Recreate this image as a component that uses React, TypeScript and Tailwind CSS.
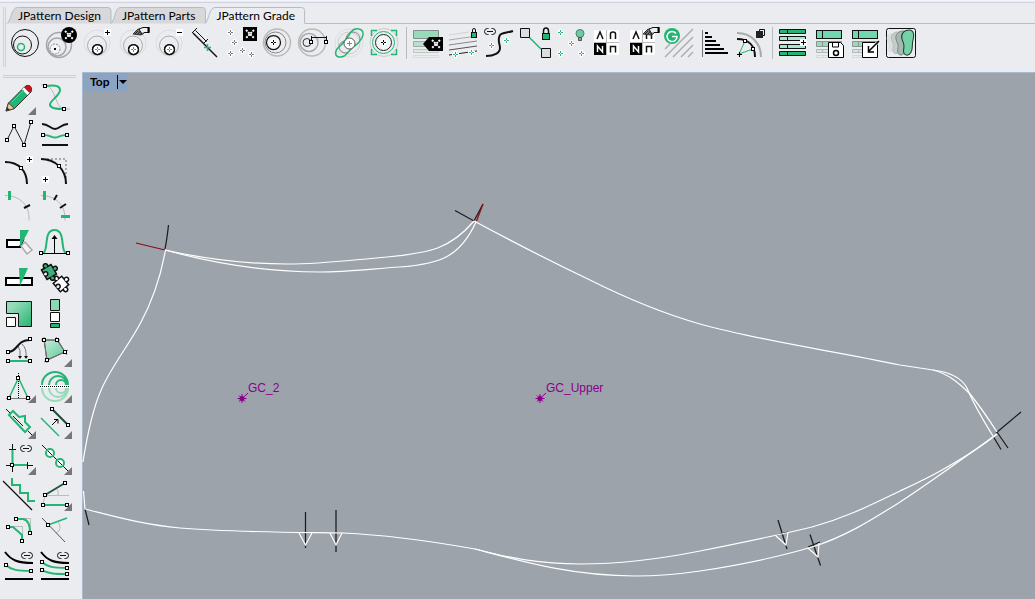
import type { ReactNode } from "react";

const GREEN = "#22b573";
const LIGHT = "#98dbbb";

interface Tool {
  name: string;
  art: ReactNode;
  flyout?: boolean;
}

/* Shared glyph parts, all drawn on a 36 x 36 grid */

function Node({ x, y }: { x: number; y: number }) {
  return <rect x={x - 1.5} y={y - 1.5} width="3" height="3" fill="#fff" stroke="#000" />;
}

function Cross({ x, y, color = GREEN }: { x: number; y: number; color?: string }) {
  return (
    <g>
      <path d={`M${x - 3} ${y}h7M${x + 0.5} ${y - 3.5}v7`} stroke="#fff" strokeWidth="3" />
      <path
        d={`M${x - 2} ${y}h2M${x + 1} ${y}h2M${x + 0.5} ${y - 2.5}v2M${x + 0.5} ${y + 0.5}v2`}
        stroke={color}
      />
    </g>
  );
}

function Badge({ x, y, minus = false }: { x: number; y: number; minus?: boolean }) {
  return (
    <g>
      <rect x={x - 3} y={y - 3} width="7" height="7" fill="#fff" />
      <path d={minus ? `M${x - 2} ${y + 0.5}h5` : `M${x - 2} ${y + 0.5}h5M${x + 0.5} ${y - 2}v5`} stroke="#000" />
    </g>
  );
}

function XMark({ x, y }: { x: number; y: number }) {
  return (
    <path
      d={`M${x - 4} ${y - 4}l8 8M${x + 4} ${y - 4}l-8 8`}
      stroke="#fff"
      strokeWidth="2"
      strokeDasharray="2 1"
    />
  );
}

function Brush() {
  return (
    <g>
      <path d="M18 9l5-5 4 1 2 3-3 2z" fill="#777" stroke="#333" />
      <path d="M24 4l4-1.500h6v5h-5l-2 2z" fill="#eee" stroke="#111" />
      <path d="M33.500 2v6" stroke="#000" strokeWidth="2" />
      <path d="M20 9l3-3M22.500 9.500l3-3.500M25 9.500l2-2" stroke="#222" />
    </g>
  );
}

function Lock({ x, y, big = false }: { x: number; y: number; big?: boolean }) {
  return big ? (
    <g>
      <path d={`M${x - 2.5} ${y}v-3q0-3 2.500-3t2.500 3v3`} stroke="#111" strokeWidth="1.5" />
      <rect x={x - 3.5} y={y - 0.5} width="7" height="6" fill={GREEN} stroke="#111" />
    </g>
  ) : (
    <g>
      <path d={`M${x - 1.5} ${y}v-3q0-1.500 1.500-1.500t1.500 1.500v3`} stroke="#111" />
      <rect x={x - 2.5} y={y - 0.5} width="5" height="5" fill={GREEN} stroke="#111" />
    </g>
  );
}

function Link({ x, y }: { x: number; y: number }) {
  return (
    <g>
      <rect x={x - 5.5} y={y - 3} width="11" height="6" rx="3" stroke="#111" />
      <path d={`M${x} ${y - 4}v2M${x} ${y + 2}v2`} stroke="#ebecf0" strokeWidth="3" />
      <path d={`M${x - 3} ${y}h6`} stroke="#111" />
    </g>
  );
}

function Rings() {
  return (
    <g>
      <circle cx="18" cy="18" r="13" stroke="#dcdcde" />
      <circle cx="18" cy="20.500" r="9.500" stroke="#aaabad" />
      <circle cx="18.500" cy="24.500" r="5" fill="#fff" stroke="#111" strokeWidth="1.25" />
      <Cross x={18} y={24.5} />
      <circle cx="18.500" cy="24.500" r="5" stroke="#111" strokeWidth="1.25" />
    </g>
  );
}

function NestTable({ left, width = 26 }: { left: number; width?: number }) {
  return (
    <g>
      <rect x={left + 0.5} y="5.500" width={width - 1} height="8" fill="#72d6af" stroke="#111" />
      <path d={`M${left + 6.5} 5v9`} stroke="#111" />
      <path d={`M${left + 0.5} 16.500h${width - 1}v5h-${width - 1}zM${left + 6.5} 16v6`} fill="#98dbbb" stroke="#8b9490" />
      <path d={`M${left + 0.5} 24.500h${width - 1}v3h-${width - 1}zM${left + 6.5} 24v4`} fill="#d3e9df" stroke="#b3b9b8" />
      <path d={`M${left + 0.5} 30.500h${width - 1}v2h-${width - 1}zM${left + 6.5} 30v3`} stroke="#d6d9db" />
    </g>
  );
}

function Letters() {
  return (
    <g>
      <path d="M5 5h12v12H5zM18 5h12v12H18zM18 18h12v12H18z" fill="#fff" />
      <path d="M5 18h12v12H5z" fill="#000" />
      <path d="M17.500 5v25M5 17.500h25" stroke="#bbb" />
      <path d="M8 14l3-7 3 7M21.500 14V9q0-2 2.500-2t2.500 2v5M21.500 27.500v-6h5v6" stroke="#111" strokeWidth="1.5" />
      <path d="M8.500 27v-6l5 6v-6" stroke="#fff" strokeWidth="1.5" />
    </g>
  );
}

const PUZZLE =
  "M-5.500-5.500h4a2.200 2.200 0 1 1 3 0h4v4a2.200 2.200 0 1 1 0 3v4h-4a2.200 2.200 0 1 1-3 0h-4v-4a2.200 2.200 0 1 0 0-3z";
const FOOT =
  "M3 0c4 0 5 4 4 8-1 3-1 5-1 8 0 4-2 8-5 8s-4-3-3-7c1-3-1-5-2-9-1-5 3-8 7-8z";

const gradeTools: Tool[] = [
  {
    name: "Grade circles",
    art: (
      <>
        <circle cx="18" cy="18" r="13.500" stroke="#111" />
        <circle cx="15.500" cy="20" r="9" stroke="#111" />
        <circle cx="14" cy="22" r="3.500" stroke={GREEN} strokeWidth="1.5" />
      </>
    ),
  },
  {
    name: "Remove grade",
    art: (
      <>
        <circle cx="16" cy="20" r="12.500" stroke="#a5a5a8" strokeWidth="1.5" />
        <circle cx="14" cy="22" r="9" stroke="#a5a5a8" strokeWidth="1.500" />
        <circle cx="12" cy="24" r="5" fill="#f4f4f6" stroke="#888" strokeDasharray="2 1" />
        <rect x="11" y="23" width="2" height="2" fill="#000" />
        <circle cx="26" cy="10" r="8" fill="#000" />
        <XMark x={26} y={10} />
      </>
    ),
  },
  { name: "Add grade point", art: <><Rings /><Badge x={28} y={7} /></> },
  { name: "Edit grade point", art: <><Rings /><Brush /></> },
  { name: "Subtract grade point", art: <><Rings /><Badge x={28} y={7} minus /></> },
  {
    name: "Measure",
    art: (
      <>
        <path d="M6 8l24 24" stroke="#111" strokeWidth="1.5" />
        <path d="M8.500 5.500l11 11M5 8l5-5M16 19l5-5" stroke="#111" />
        <path d="M17 22.500h7M20.500 19v7" stroke={GREEN} strokeWidth="1.500" />
      </>
    ),
  },
  {
    name: "Delete points",
    art: (
      <>
        <Cross x={7} y={7.5} color="#777" />
        <Cross x={11} y={17.5} color="#777" />
        <Cross x={7} y={28.5} color="#777" />
        <Cross x={19} y={25.5} color="#777" />
        <Cross x={28} y={29.5} color="#777" />
        <path d="M20 2h14v14H20z" fill="#000" />
        <XMark x={27} y={9} />
      </>
    ),
  },
  {
    name: "Offset rings",
    art: (
      <>
        <circle cx="18" cy="17.500" r="13.500" stroke="#bbb" strokeWidth="1.5" />
        <circle cx="16.500" cy="17.500" r="10.500" stroke="#888" />
        <circle cx="14.500" cy="17.500" r="7" fill="#f4f4f6" stroke="#111" strokeWidth="1.25" />
        <Cross x={14} y={17.5} color="#000" />
      </>
    ),
  },
  {
    name: "Ring distance",
    art: (
      <>
        <circle cx="17" cy="17.500" r="13.500" stroke="#bbb" strokeWidth="1.500" />
        <circle cx="14" cy="17.500" r="9" stroke="#aaa" strokeWidth="1.500" />
        <circle cx="12" cy="17.500" r="4" stroke="#333" />
        <path d="M16.500 11v6M31.500 11v6M16 12.500h15" stroke="#111" />
        <Node x={16} y={17} />
        <Node x={31} y={17} />
      </>
    ),
  },
  {
    name: "Grade path",
    art: (
      <>
        <circle cx="18" cy="18" r="14" stroke="#dedee0" />
        <circle cx="18" cy="18" r="11" stroke="#ccc" />
        <circle cx="22" cy="14" r="7" stroke="#888" />
        <circle cx="14" cy="22" r="6" stroke="#888" />
        <path d="M20 7c4-5 13-4 12 3-1 6-7 10-11 13-5 5-7 10-13 9-5-1-4-7 0-10 5-4 8-9 12-15z" stroke={GREEN} strokeWidth="1.5" />
        <circle cx="18.500" cy="18.500" r="5.500" fill="#fff" stroke="#555" />
        <path d="M16 18.500h5M18.500 16v5" stroke={GREEN} />
      </>
    ),
  },
  {
    name: "Select ring",
    art: (
      <>
        <circle cx="17" cy="17.500" r="14" stroke="#ccc" />
        <circle cx="16.500" cy="17.500" r="11" stroke={GREEN} />
        <circle cx="16.500" cy="17.500" r="8" fill="#f4f4f6" stroke="#222" />
        <Cross x={16} y={17.5} color="#000" />
        <path d="M10 5.500H4.500V11M24 5.500h5.500V11M4.500 24v5.500H10M24 29.500h5.500V24" stroke={GREEN} strokeWidth="1.5" />
      </>
    ),
  },
];

const nestTools: Tool[] = [
  {
    name: "Delete row",
    art: (
      <>
        <path d="M4.500 5.500h25v8h-25z" fill={LIGHT} stroke="#7f9188" />
        <path d="M4.500 16.500h25v5h-25z" fill="#b5e0cc" stroke="#a3aaa8" />
        <path d="M4.500 24.500h25v3h-25z" fill="#d9ebe3" stroke="#c0c5c5" />
        <path d="M4.500 30.500h25v2h-25z" stroke="#d9dcdd" />
        <path d="M14 19l6-7h14v14H20z" fill="#000" />
        <XMark x={27} y={19} />
      </>
    ),
  },
  {
    name: "Lock lines",
    art: (
      <>
        <path d="M4 10l20-3" stroke="#d3d3d6" />
        <path d="M4 15l28-4" stroke="#aaa" />
        <path d="M4 20l28-4" stroke="#888" />
        <path d="M4 25l28-4" stroke="#555" />
        <path d="M4 30l28-4" stroke="#222" />
        <Cross x={10} y={29.5} />
        <Cross x={26} y={27.5} />
        <Lock x={29} y={8} />
      </>
    ),
  },
  {
    name: "Link curve",
    art: (
      <>
        <path d="M5 31c8 0 14-3 14-8 0-4-3-8 0-13 2-3 7-2 13-4" stroke="#111" strokeWidth="2" />
        <Link x={9} y={6.5} />
        <Cross x={10} y={20.5} />
        <Cross x={25} y={15.5} />
      </>
    ),
  },
  {
    name: "Lock link",
    art: (
      <>
        <path d="M12 12l12 12" stroke={GREEN} strokeWidth="1.500" />
        <path d="M3.500 3.500h9v9h-9zM24.500 23.500h9v9h-9z" fill="#ddd" stroke="#111" />
        <Lock x={29} y={9} big />
      </>
    ),
  },
  {
    name: "Show points",
    art: (
      <>
        <Cross x={7} y={7.5} />
        <Cross x={18} y={18.5} />
        <Cross x={7} y={28.5} />
        <Cross x={28} y={28.5} />
        <circle cx="27" cy="8.500" r="4" fill="#6fcaa0" stroke="#3b8766" />
        <path d="M25.500 12.500h3v3h-3z" fill="#999" stroke="#555" />
      </>
    ),
  },
  { name: "Notch types", art: <Letters /> },
  { name: "Edit notch types", art: <><Letters /><Brush /></> },
  {
    name: "Grade hatch",
    art: (
      <>
        <path d="M4 32L32 4M12 32l20-20M20 32l12-12M27 32l5-5M4 24l5-5" stroke="#aeaeb1" strokeWidth="1.5" />
        <circle cx="11" cy="11" r="8" fill={GREEN} />
        <path d="M15 8.500a5 5 0 1 0 1 3h-5" stroke="#fff" strokeWidth="1.5" />
      </>
    ),
  },
  {
    name: "Size steps",
    art: (
      <>
        <path d="M5.500 5v27" stroke="#777" />
        <path d="M8 8h3M8 12h7M8 16h11M8 20h15M8 24h19M8 28h23" stroke="#000" strokeWidth="2" />
      </>
    ),
  },
  {
    name: "Radial grade",
    art: (
      <>
        <path d="M4 8c14 0 24 10 24 24" stroke="#aaa" strokeWidth="2" />
        <path d="M4 14c12 0 18 7 18 18" stroke="#111" strokeWidth="2" />
        <path d="M12 16L6 29l14-5" stroke={GREEN} />
        <path d="M4 29.500h5M6.500 27v5" stroke="#000" />
        <Node x={12} y={16} />
        <Node x={20} y={24} />
        <path d="M26.500 4.500h5v6h-5z" stroke="#111" />
        <path d="M23 6h7v7h-7z" fill="#222" />
      </>
    ),
  },
];

const tableTools: Tool[] = [
  {
    name: "Add row",
    art: (
      <>
        <path d="M4.500 4.500h26v4h-26zM4.500 26.500h26v4h-26z" fill={GREEN} stroke="#111" />
        <path d="M4.500 11.500h26v4h-26zM4.500 19.500h26v4h-26z" fill="#aee3cb" stroke="#111" />
        <path d="M12.500 4v5M12.500 11v5M12.500 19v5M12.500 26v5" stroke="#111" />
        <Badge x={28} y={17} />
      </>
    ),
  },
  {
    name: "Save table",
    art: (
      <>
        <NestTable left={5} />
        <path d="M17.500 17.500h12l3 3v12h-15z" fill="#fff" stroke="#000" />
        <path d="M21.500 18v4h6v-4" stroke="#000" />
        <circle cx="25" cy="28" r="2.500" stroke="#000" strokeWidth="1.5" />
      </>
    ),
  },
  {
    name: "Import table",
    art: (
      <>
        <NestTable left={5} />
        <path d="M28 17.500H15.500v15h15V20" fill="#fff" stroke="#000" />
        <path d="M32 16L21 27M21.500 21v6H27" stroke="#000" strokeWidth="1.500" />
      </>
    ),
  },
  {
    name: "Show nested sizes",
    art: (
      <>
        <rect x="3.500" y="3.500" width="29" height="29" rx="2" stroke="#111" fill="#ebecf0" />
        <g transform="translate(7 8) scale(.8)"><path d={FOOT} fill="#dcdfe0" /></g>
        <g transform="translate(12 7) scale(.9)"><path d={FOOT} fill="#c4cdca" stroke="#b1b8b7" /></g>
        <g transform="translate(17 6)"><path d={FOOT} fill="#a5b9b0" stroke="#7b8682" /></g>
        <g transform="translate(23 5) scale(1.05)"><path d={FOOT} fill="#75d1a8" stroke="#24392f" /></g>
      </>
    ),
  },
];

const drawTools: Tool[] = [
  {
    name: "Pencil",
    flyout: true,
    art: (
      <>
        <path d="M5 31l2.500-8L24 6.500q2-2 5-.500 3 3 1 6L13.500 28.500z" fill={GREEN} stroke="#333" />
        <path d="M5 31l2.500-8 6 5.500z" fill="#f1c896" stroke="#444" />
        <path d="M5 31l1-4 3 3z" fill="#333" />
        <path d="M25 6q2-2 4.500 0 2.500 2.500.500 5l-2 2-5.500-5z" fill="#c1121f" />
        <path d="M21 9.500l5.500 5.500 2-2L23 7.500z" fill="#fff" />
        <path d="M11 22L23 10" stroke="#5ccb98" />
      </>
    ),
  },
  {
    name: "Free curve",
    art: (
      <>
        <path d="M4 5h4c12 3 9 22 19 24h6" stroke="#b9b9bc" />
        <path d="M8 6c8-1 15-1 15 4 0 6-11 11-10 15s8 4 14 4" stroke={GREEN} strokeWidth="2" />
        <Node x={8} y={6} />
        <Node x={27} y={29} />
      </>
    ),
  },
  {
    name: "Polyline",
    art: (
      <>
        <path d="M6 24l7-14 10 19 7-23" stroke="#222" />
        <Node x={6} y={24} /><Node x={13} y={10} /><Node x={23} y={29} /><Node x={30} y={6} />
      </>
    ),
  },
  {
    name: "Middle curve",
    art: (
      <>
        <path d="M5 8c7 0 8 5 13 5s6-5 13-5M5 29h26" stroke="#111" strokeWidth="2" />
        <path d="M6 19c8 0 8 2.500 12 2.500s4-2.500 12-2.500" stroke={GREEN} strokeWidth="2" />
        <Node x={6} y={19} /><Node x={30} y={19} />
      </>
    ),
  },
  {
    name: "Add point on curve",
    art: (
      <>
        <path d="M4 10c14 0 22 9 22 22" stroke="#111" strokeWidth="2" />
        <Node x={20} y={16} />
        <Badge x={28} y={7} />
      </>
    ),
  },
  {
    name: "Add corner point",
    art: (
      <>
        <path d="M10 7h19v21" stroke="#aaa" strokeWidth="2" strokeDasharray="2 2" />
        <path d="M4 7c14 0 25 10 25 25" stroke="#111" strokeWidth="2" />
        <Node x={22} y={14} />
        <Badge x={8} y={27} />
      </>
    ),
  },
  {
    name: "Point at distance",
    art: (
      <>
        <path d="M4 7.500c14 0 25 9 24 25" stroke="#b9b9bc" />
        <path d="M8.500 3v9" stroke={GREEN} strokeWidth="3" />
        <path d="M23 20l6-3" stroke="#111" strokeWidth="2" />
      </>
    ),
  },
  {
    name: "Divide curve",
    art: (
      <>
        <path d="M4 7.500c14 0 25 9 24 25" stroke="#b9b9bc" />
        <path d="M7.500 3v9M24 28.500h9" stroke={GREEN} strokeWidth="3" />
        <path d="M23 20l6-4M17 12l3-5" stroke="#111" strokeWidth="2" />
      </>
    ),
  },
  {
    name: "Cut piece",
    art: (
      <>
        <path d="M6 16h16l-3 7H6z" fill="#fff" stroke="#000" strokeWidth="2" />
        <path d="M20 22l4-4 7 8-5 4z" fill="#f4f4f6" stroke="#aaa" strokeWidth="1.500" />
        <path d="M19 6h9l-8 15-1 2z" fill={GREEN} />
      </>
    ),
  },
  {
    name: "Bell curve",
    art: (
      <>
        <path d="M6 29c6-2 0-23 11.500-23S23 27 29 29" stroke={GREEN} strokeWidth="2" />
        <path d="M4 29.500h27M17.500 29V12" stroke="#000" />
        <path d="M14.500 15l3-4 3 4z" fill="#000" />
        <Node x={4} y={29} /><Node x={31} y={29} />
      </>
    ),
  },
  {
    name: "Split piece",
    art: (
      <>
        <path d="M5 18h26v7H5z" fill="#fff" stroke="#000" strokeWidth="2" />
        <path d="M18 8h9l-8 18z" fill={GREEN} />
      </>
    ),
  },
  {
    name: "Join pieces",
    art: (
      <>
        <g transform="translate(24 24) rotate(-40)"><path d={PUZZLE} fill="#fff" stroke="#111" strokeWidth="1.500" /></g>
        <g transform="translate(12 12) rotate(-30)"><path d={PUZZLE} fill="#3fae7c" stroke="#111" strokeWidth="1.500" /></g>
      </>
    ),
  },
  {
    name: "Scale",
    art: (
      <>
        <defs>
          <linearGradient id="scaleFill" x1="0" y1="0" x2="1" y2="1">
            <stop offset="0.200" stopColor="#98dbbb" />
            <stop offset="1" stopColor="#22b573" />
          </linearGradient>
        </defs>
        <path d="M5.500 5.500h25v25h-13v-13h-12z" fill="url(#scaleFill)" stroke="#111" />
        <path d="M5.500 21.500h9v9h-9z" fill="#fff" stroke="#111" />
      </>
    ),
  },
  {
    name: "Stack",
    art: (
      <>
        <path d="M13.500 3.500h9v11h-9z" fill="#8bd9b4" stroke="#111" />
        <path d="M13.500 16.500h9v9h-9z" fill="#fff" stroke="#111" />
        <path d="M13.500 27.500h9v4h-9z" fill={GREEN} stroke="#111" />
      </>
    ),
  },
  {
    name: "Project curve",
    art: (
      <>
        <path d="M17 14q3 4 2 11M21 12q5 5 4 13" stroke="#777" />
        <path d="M17 24h4l-2 3zM23 24h4l-2 3z" fill="#111" />
        <path d="M7 20c10 0 8-12 22-12" stroke="#111" strokeWidth="2" />
        <path d="M7 29h22" stroke={GREEN} strokeWidth="2" />
        <Node x={7} y={20} /><Node x={29} y={7} /><Node x={7} y={29} /><Node x={29} y={29} />
      </>
    ),
  },
  {
    name: "Polygon piece",
    flyout: true,
    art: (
      <>
        <defs>
          <linearGradient id="pieceFill" x1="0" y1="0" x2="1" y2="1">
            <stop offset="0" stopColor="#c6eddb" />
            <stop offset="1" stopColor="#5cc799" />
          </linearGradient>
        </defs>
        <path d="M7 8h13l8 12-18 8z" fill="url(#pieceFill)" stroke="#444" />
        <path d="M4 8h19M7 5l3 26M19 5l11 18M31 18L7 30" stroke="#777" />
        <Node x={7} y={8} /><Node x={20} y={8} /><Node x={28} y={20} /><Node x={10} y={28} />
      </>
    ),
  },
  {
    name: "Symmetry",
    flyout: true,
    art: (
      <>
        <path d="M8 30l9.500-20L27 30" stroke={GREEN} strokeWidth="1.500" />
        <path d="M5 30.500h25" stroke="#777" />
        <path d="M17.500 5v25" stroke="#000" strokeDasharray="1 1" />
        <Node x={17} y={10} /><Node x={8} y={30} /><Node x={27} y={30} />
      </>
    ),
  },
  {
    name: "Mirror",
    flyout: true,
    art: (
      <>
        <path d="M5 17a13 13 0 0 1 26 0M12 17a8 8 0 0 1 18 0M19 17a5 5 0 0 1 10 0" stroke={GREEN} strokeWidth="2" />
        <path d="M5 20a13 13 0 0 0 26 0M12 20a8 8 0 0 0 18 0M19 20a5 5 0 0 0 10 0" stroke="#98dbbb" strokeWidth="2" />
        <path d="M3 18.500h30" stroke="#fff" strokeWidth="3" />
        <path d="M3 18.500h30" stroke="#000" strokeDasharray="1 1" />
      </>
    ),
  },
  {
    name: "Tab outline",
    flyout: true,
    art: (
      <>
        <path d="M8 11l4-4 6 6 6-1v6l5 5-5 5z" stroke={GREEN} strokeWidth="2" />
        <path d="M5 5l4 4M12 12l10 10M27 27l5 5" stroke="#111" />
      </>
    ),
  },
  {
    name: "Offset line",
    flyout: true,
    art: (
      <>
        <path d="M4 14l18 18" stroke={GREEN} strokeWidth="1.5" />
        <path d="M15 5l16 16" stroke="#1b4d38" strokeWidth="2" />
        <path d="M15 21l5-5M17 15.500h4v4" stroke="#000" />
        <Node x={15} y={5} /><Node x={31} y={21} />
      </>
    ),
  },
  {
    name: "Axis",
    flyout: true,
    art: (
      <>
        <path d="M11.500 4v28M5 25.500h27M8 9.500h7M26.500 22v7" stroke="#111" />
        <path d="M11.500 10v15H26" stroke={GREEN} strokeWidth="2" />
        <Node x={11} y={25} />
        <Link x={25} y={8.5} />
      </>
    ),
  },
  {
    name: "Punch holes",
    flyout: true,
    art: (
      <>
        <path d="M5 5l27 27" stroke="#111" />
        <circle cx="13" cy="13" r="4" fill="#fff" stroke={GREEN} strokeWidth="2" />
        <circle cx="23" cy="23" r="4" fill="#fff" stroke={GREEN} strokeWidth="2" />
        <path d="M11 11l4 4M21 21l4 4" stroke="#111" />
      </>
    ),
  },
  {
    name: "Zigzag edge",
    art: (
      <>
        <path d="M2 5l29 29" stroke="#111" strokeWidth="1.25" />
        <path d="M11 2v7h8v8h8v8h7" stroke={GREEN} strokeWidth="2" />
      </>
    ),
  },
  {
    name: "Rotate line",
    flyout: true,
    art: (
      <>
        <path d="M8 19.500h24M8 19l-2 9M20 13q2 3 1 6" stroke="#bbb" />
        <path d="M8 19L28 7" stroke="#20573f" strokeWidth="2" />
        <path d="M6 29h24" stroke={GREEN} strokeWidth="2" />
        <Node x={8} y={19} /><Node x={28} y={7} /><Node x={6} y={29} /><Node x={30} y={29} />
      </>
    ),
  },
  {
    name: "Round corner",
    art: (
      <>
        <path d="M15 6.500h14.500v14M7 14.500h14.500v14" stroke="#bbb" />
        <path d="M15 7h7q7 1 7 14M7 15h5l9 8v6" stroke={GREEN} strokeWidth="2" />
        <Node x={15} y={7} /><Node x={29} y={21} /><Node x={7} y={15} /><Node x={21} y={29} />
      </>
    ),
  },
  {
    name: "Angle",
    art: (
      <>
        <path d="M21 9q5 9-2 12" stroke="#bbb" />
        <path d="M5 6l23 24" stroke="#555" />
        <path d="M11 13l19-7" stroke={GREEN} strokeWidth="1.500" />
        <Node x={11} y={13} />
      </>
    ),
  },
  {
    name: "Linked offset",
    art: (
      <>
        <path d="M4 4c6 8 12 11 28 11M4 31h28" stroke="#000" strokeWidth="2" />
        <path d="M5 17c5 5 12 6 25 6" stroke={GREEN} strokeWidth="2" />
        <Node x={5} y={17} /><Node x={30} y={23} />
        <Link x={26} y={7.5} />
      </>
    ),
  },
  {
    name: "Linked double offset",
    art: (
      <>
        <path d="M4 4c6 8 12 11 28 11M4 31h28" stroke="#000" strokeWidth="2" />
        <path d="M5 14c5 5 12 6 25 6M5 22c6 4 14 4 25 4" stroke={GREEN} strokeWidth="2" />
        <Node x={5} y={14} /><Node x={30} y={20} /><Node x={5} y={22} /><Node x={30} y={26} />
        <Link x={26} y={7.5} />
      </>
    ),
  },
];

function ToolButton({ tool }: { tool: Tool }) {
  return (
    <button type="button" aria-label={tool.name} className="size-9 shrink-0">
      <svg viewBox="0 0 36 36" fill="none" className="block size-9">
        {tool.art}
        {tool.flyout && <path d="M35 27v8h-8z" fill="#77777a" />}
      </svg>
    </button>
  );
}

function ToolSeparator() {
  return (
    <div className="flex w-[6px] shrink-0 justify-center py-0.5">
      <div className="w-px bg-[#b9babd]" />
    </div>
  );
}

function Tab({ label, active = false }: { label: string; active?: boolean }) {
  return (
    <button
      type="button"
      role="tab"
      aria-selected={active}
      className="relative h-[17px] pr-[10px] pl-[11px] text-xs leading-[17px] whitespace-nowrap text-black"
    >
      <svg
        viewBox="0 0 100 17"
        preserveAspectRatio="none"
        className="absolute inset-0 h-full w-full overflow-visible"
      >
        <path
          d="M0 16.500C4 14 4 .5 10 .5h87q3 0 3 3v13"
          fill={active ? "#ebecf0" : "#d8d8da"}
          stroke="#b4bccb"
          vectorEffect="non-scaling-stroke"
        />
      </svg>
      <span className="relative">{label}</span>
    </button>
  );
}

function GradeCenter({ x, y, label }: { x: number; y: number; label: string }) {
  return (
    <g>
      <path
        d={`M${x - 4.5} ${y + 0.5}h9M${x} ${y - 4}v9M${x - 3} ${y - 2.5}l6 6M${x - 3} ${y + 3.5}L${x + 6} ${y - 5}`}
        stroke="#8b008b"
      />
      <circle cx={x} cy={y + 0.5} r="2.500" fill="#8b008b" />
      <text
        x={x + 6}
        y={y - 6}
        fill="#8b008b"
        className="font-['Liberation_Sans',Arial,sans-serif] text-xs"
      >
        {label}
      </text>
    </g>
  );
}

function PatternDrawing() {
  return (
    <svg viewBox="82 72 953 527" fill="none" className="block w-full">
      {/* tick marks */}
      <g stroke="#1c1c1c" strokeWidth="1.25">
        <path d="M165 249q2-10 3.500-24M455 210.500L474 221l9-17" />
        <path d="M996 433l25-21M993 436l8 13.500M997 432l11 16" />
        <path d="M305.500 512v36M336 510v42M85 509l4 16" />
        <path d="M778 520l9 29M777 535l11-3M810 534.500l10.500 31M808 547l12-5" />
      </g>
      <path d="M136 243l29 7M483 204l-6.500 17" stroke="#8c0d14" strokeWidth="1.250" />

      {/* outline */}
      <g stroke="#fff" strokeWidth="1.200">
        <path d="M165.500 250C161 275 152 302 140 324C128 346 112 366 102 388C92 410 87 436 83 462" />
        <path d="M83.500 491L85 509C117 517 145 525 180 528C226 532 270 532 343 533C390 535 430 541 475 549" />
        <path d="M475 549C510 558 540 564 580 564C620 564 665 558 700 551C740 543 775 536 812 527C848 517 873 504 900 491C915 484 928 478 942 470C965 457 985 444 997 434" />
        <path d="M475 549C517 560 570 576 635 576C660 576 680 574 700 571C740 565 775 558 812 547C845 537 873 519 900 502C925 486 950 468 997 434" />
        <path d="M165 250C205 259 245 264 287 264C325 264 350 260 387 257C430 253 450 249 474 221" />
        <path d="M165 250C205 261 260 272 320 272C345 272 370 269 400 267C440 264 460 257 476 222" />
        <path d="M474 221C515 243 550 261 590 280C630 300 665 314 700 324C765 342 830 350 900 365L933 370" />
        <path d="M933 370C950 372 961 377 967 388C974 405 983 420 993 436" />
        <path d="M933 370C948 374 958 382 970 394C979 405 986 415 997 432" />
        <path d="M299 533l6.500 12 6.500-12M330 533l6 12 6-12" />
        <path d="M776 536l10 9 2-13M808 548l10 9 1-14" />
      </g>

      <GradeCenter x={242} y={398} label="GC_2" />
      <GradeCenter x={540} y={398} label="GC_Upper" />
    </svg>
  );
}

export default function App() {
  return (
    <div className="flex min-h-screen flex-col bg-[#ebecf0] font-['Lato','Noto_Sans',sans-serif]">
      <header className="border-t border-[#f4f5f8] pt-px pb-[5px]">
        <div className="mb-1 h-px bg-[#d0d4e2]" />
        <div className="flex pl-[3px]">
          <div className="mr-px w-[3px] border-x border-[#c8d2e0]" />
          <div className="min-w-0 flex-1">
            <div role="tablist" className="flex">
              <Tab label="JPattern Design" />
              <Tab label="JPattern Parts" />
              <Tab label="JPattern Grade" active />
              <div className="flex-1 border-b border-[#b4bccb]" />
            </div>
            <div role="toolbar" aria-label="Grading" className="flex overflow-hidden pt-px pb-[6px]">
              {gradeTools.map((tool) => (
                <ToolButton key={tool.name} tool={tool} />
              ))}
              <ToolSeparator />
              {nestTools.map((tool) => (
                <ToolButton key={tool.name} tool={tool} />
              ))}
              <ToolSeparator />
              {tableTools.map((tool) => (
                <ToolButton key={tool.name} tool={tool} />
              ))}
            </div>
          </div>
        </div>
      </header>

      <div className="flex flex-1">
        <aside className="w-[82px] shrink-0 pt-[3px]">
          <div className="mr-[6px] mb-0.5 ml-[3px] h-[3px] border-y border-[#c8cedb]" />
          <div className="grid w-[73px] grid-cols-[36px_36px] pl-px">
            {drawTools.map((tool) => (
              <ToolButton key={tool.name} tool={tool} />
            ))}
          </div>
        </aside>

        <main className="relative min-w-0 flex-1 overflow-hidden bg-[#9ca3ab] shadow-[inset_1px_1px_0_#a9b9d0]">
          <PatternDrawing />
          <div className="absolute top-px left-px flex h-[18px] items-center bg-[#8ba4c3] pl-[7px] text-xs font-bold text-black">
            <span>Top</span>
            <button
              type="button"
              aria-label="Viewport menu"
              className="ml-2 flex h-[14px] w-[11px] items-center justify-center border-l border-black"
            >
              <svg viewBox="0 0 8 4" className="h-1 w-2">
                <path d="M0 0h8L4 4z" />
              </svg>
            </button>
          </div>
        </main>
      </div>
    </div>
  );
}
